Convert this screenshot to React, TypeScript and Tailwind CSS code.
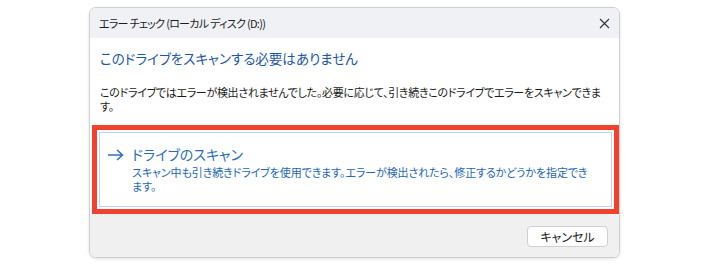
import React from "react";

const jp = "font-['Noto_Sans_CJK_JP','Noto_Sans',sans-serif] [font-feature-settings:'palt']";

function CloseIcon() {
  return (
    <svg width="11" height="11" viewBox="0 0 11 11" className="text-[#333]">
      <path d="M1 1 L10 10 M10 1 L1 10" stroke="currentColor" strokeWidth="1.1" />
    </svg>
  );
}

function ArrowIcon() {
  return (
    <svg width="17" height="12" viewBox="0 0 17 12" className="text-[#2f72c0]">
      <path
        d="M1 6 H15.5 M10 1 L15.5 6 L10 11"
        stroke="currentColor"
        strokeWidth="1.6"
        fill="none"
      />
    </svg>
  );
}

export default function App() {
  return (
    <div className={`h-[265px] w-[708px] bg-white pl-[89px] pt-[7px] ${jp}`}>
      <div className="flex h-[251px] w-[531px] flex-col overflow-hidden rounded-[7px] border border-[#cfcfcf] bg-white shadow-[0_1px_3px_rgba(0,0,0,0.12)]">
        {/* title bar */}
        <div className="flex h-[30px] shrink-0 items-center justify-between bg-[#eff1f4] pl-[9px] pr-[9px]">
          <span className="text-[11px] tracking-[-0.7px] text-[#1b1b1b]">
            エラー チェック (ローカル ディスク (D:))
          </span>
          <CloseIcon />
        </div>

        {/* content */}
        <div className="flex flex-1 flex-col pl-[2px]">
          <div className="pl-[8px] pt-[10px] text-[13.5px] leading-[20px] text-[#1a56a6]">
            このドライブをスキャンする必要はありません
          </div>
          <div className="pl-[8px] pr-[6px] pt-[17px] text-[11px] leading-[14px] tracking-[-0.3px] text-[#1a1a1a]">
            このドライブではエラーが検出されませんでした。必要に応じて、引き続きこのドライブでエラーをスキャンできます。
          </div>

          <div className="mt-[12px] border-[5px] border-[#f2412f] p-[2px]">
            <div className="flex h-[75px] border border-[#b9d5ee] bg-white pt-[11px]">
              <div className="w-[32px] shrink-0 pl-[7px] pt-[5px]">
                <ArrowIcon />
              </div>
              <div className="flex flex-col pr-[16px]">
                <div className="text-[14px] leading-[20px] text-[#2a6cb8]">
                  ドライブのスキャン
                </div>
                <div className="pt-[1px] text-[11px] leading-[14px] tracking-[-0.1px] text-[#2266b4]">
                  スキャン中も引き続きドライブを使用できます。エラーが検出されたら、修正するかどうかを指定できます。
                </div>
              </div>
            </div>
          </div>
        </div>

        {/* footer */}
        <div className="flex h-[43px] shrink-0 items-start justify-end bg-[#f0f0f0] pr-[11px] pt-[12px]">
          <button className="h-[21px] w-[81px] rounded-[4px] border border-[#d0d0d0] bg-white text-[12px] leading-[19px] text-[#1a1a1a]">
            キャンセル
          </button>
        </div>
      </div>
    </div>
  );
}
